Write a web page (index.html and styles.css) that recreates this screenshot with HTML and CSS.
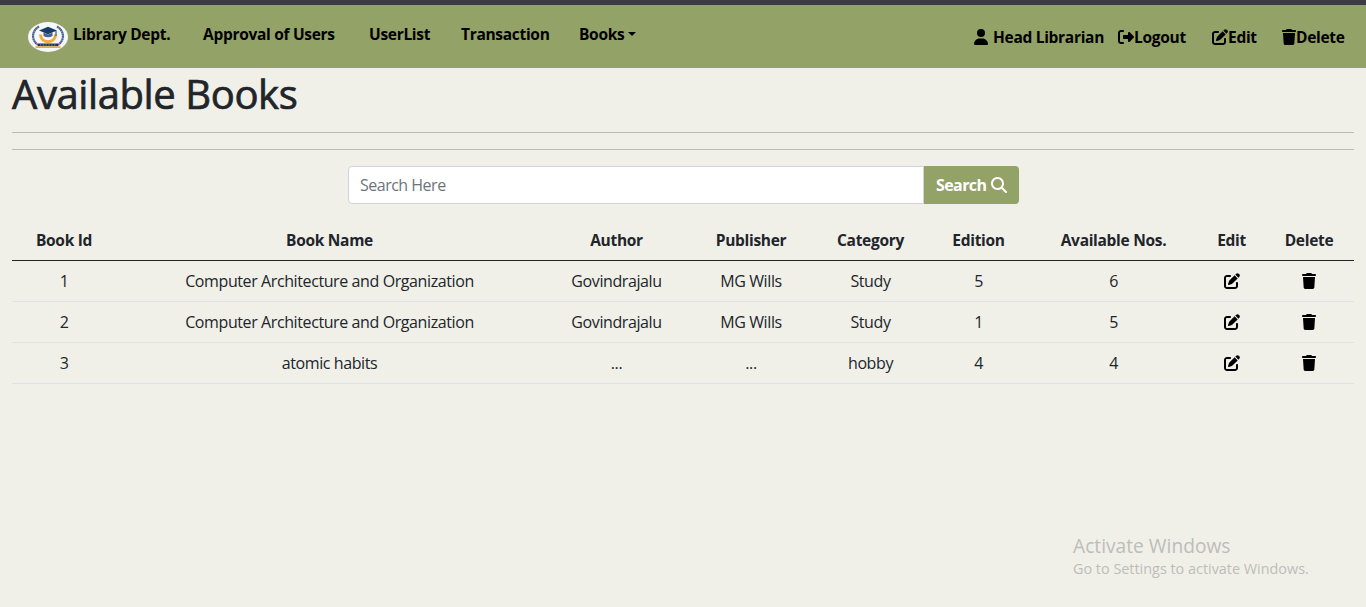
FILE: index.html
```html
<!DOCTYPE html>
<html lang="en">
<head>
<meta charset="utf-8">
<title>Available Books</title>
<link rel="stylesheet" href="styles.css">
</head>
<body>
<svg class="sprite" aria-hidden="true">
  <symbol id="user" viewBox="0 0 448 512"><path d="M224 256A128 128 0 1 0 224 0a128 128 0 1 0 0 256zm-45.7 48C79.8 304 0 383.8 0 482.3C0 498.7 13.3 512 29.7 512H418.3c16.4 0 29.7-13.3 29.7-29.7C448 383.8 368.2 304 269.7 304H178.3z"/></symbol>
  <symbol id="edit" viewBox="0 0 512 512"><path d="M471.6 21.7c-21.9-21.9-57.3-21.9-79.2 0L362.3 51.7l97.9 97.9 30.1-30.1c21.9-21.9 21.9-57.3 0-79.2L471.6 21.7zm-299.2 220c-6.1 6.1-10.8 13.6-13.5 21.9l-29.6 88.8c-2.9 8.6-.6 18.1 5.8 24.6s15.9 8.7 24.6 5.8l88.8-29.6c8.2-2.7 15.7-7.4 21.9-13.5L437.7 172.3 339.7 74.3 172.4 241.7zM96 64C43 64 0 107 0 160V416c0 53 43 96 96 96H352c53 0 96-43 96-96V320c0-17.7-14.3-32-32-32s-32 14.3-32 32v96c0 17.7-14.3 32-32 32H96c-17.7 0-32-14.3-32-32V160c0-17.7 14.3-32 32-32h96c17.7 0 32-14.3 32-32s-14.3-32-32-32H96z"/></symbol>
  <symbol id="trash" viewBox="0 0 448 512"><path d="M135.2 17.7L128 32H32C14.3 32 0 46.3 0 64S14.3 96 32 96H416c17.7 0 32-14.3 32-32s-14.3-32-32-32H320l-7.2-14.3C307.4 6.8 296.3 0 284.2 0H163.8c-12.1 0-23.2 6.8-28.6 17.7zM416 128H32L53.2 467c1.6 25.3 22.6 45 47.9 45H346.9c25.3 0 46.3-19.7 47.9-45L416 128z"/></symbol>
  <symbol id="logout" viewBox="0 0 512 512"><path d="M377.9 105.9L500.7 228.7c7.2 7.2 11.3 17.1 11.3 27.3s-4.1 20.1-11.3 27.3L377.9 406.1c-6.4 6.4-15 9.9-24 9.9c-18.7 0-33.9-15.2-33.9-33.9l0-62.1-128 0c-17.7 0-32-14.3-32-32l0-64c0-17.7 14.3-32 32-32l128 0 0-62.1c0-18.7 15.2-33.9 33.9-33.9c9 0 17.6 3.6 24 9.9zM160 96L96 96c-17.7 0-32 14.3-32 32l0 256c0 17.7 14.3 32 32 32l64 0c17.7 0 32 14.3 32 32s-14.3 32-32 32l-64 0c-53 0-96-43-96-96L0 128C0 75 43 32 96 32l64 0c17.7 0 32 14.3 32 32s-14.3 32-32 32z"/></symbol>
  <symbol id="search" viewBox="0 0 512 512"><path d="M416 208c0 45.9-14.9 88.3-40 122.7L502.6 457.4c12.5 12.5 12.5 32.8 0 45.3s-32.8 12.5-45.3 0L330.7 376c-34.4 25.2-76.8 40-122.7 40C93.1 416 0 322.9 0 208S93.1 0 208 0S416 93.1 416 208zM208 352a144 144 0 1 0 0-288 144 144 0 1 0 0 288z"/></symbol>
</svg>
<header class="navbar">
  <svg class="logo" viewBox="0 0 40 30">
    <ellipse cx="20" cy="15" rx="20" ry="15" fill="#f6f7f8"/>
    <g fill="none" stroke="#4a6390" stroke-width="2.2" stroke-dasharray="2 .3">
      <path d="M11 4.500C3.500 9 3 18 10 23"/>
      <path d="M29 4.500C36.500 9 37 18 30 23"/>
    </g>
    <path d="M12.500 12.500C12.500 22 27.500 22 27.500 12.500" fill="none" stroke="#f2a93b" stroke-width="3"/>
    <path d="M20 4.800L29 8.500L20 12.200L11 8.500Z" fill="#173a6b"/>
    <path d="M15.500 10.500V14Q20 16.500 24.500 14V10.500L20 12.500Z" fill="#46648e"/>
    <path d="M28 9V14" stroke="#173a6b"/>
    <rect x="10" y="21.500" width="20" height="2.800" fill="#173a6b"/>
    <path d="M12 23H28" stroke="#8394ad" stroke-width="1" stroke-dasharray="1.300 1.500"/>
    <path d="M7.500 24.300H32.500V26H7.500Z" fill="#f2a93b"/>
  </svg>
  <nav class="links">
    <a class="brand">Library Dept.</a>
    <a class="approval">Approval of Users</a>
    <a class="userlist">UserList</a>
    <a class="transaction">Transaction</a>
    <a class="books">Books<span class="caret"></span></a>
  </nav>
  <div class="account">
    <a class="librarian"><svg class="icon narrow"><use href="#user"/></svg><span>Head Librarian</span></a>
    <a class="logout"><svg class="icon"><use href="#logout"/></svg>Logout</a>
    <a class="edit"><svg class="icon"><use href="#edit"/></svg>Edit</a>
    <a class="delete"><svg class="icon narrow"><use href="#trash"/></svg>Delete</a>
  </div>
</header>
<main>
  <h1>Available Books</h1>
  <hr>
  <hr>
  <form class="search">
    <input type="text" placeholder="Search Here">
    <button type="button">Search <svg class="icon"><use href="#search"/></svg></button>
  </form>
  <table>
    <colgroup><col class="c-id"><col class="c-name"><col class="c-author"><col class="c-publisher"><col class="c-category"><col class="c-edition"><col class="c-available"><col class="c-edit"><col class="c-delete"></colgroup>
    <thead>
      <tr><th>Book Id</th><th>Book Name</th><th>Author</th><th>Publisher</th><th>Category</th><th>Edition</th><th>Available Nos.</th><th>Edit</th><th>Delete</th></tr>
    </thead>
    <tbody>
      <tr><td>1</td><td>Computer Architecture and Organization</td><td>Govindrajalu</td><td>MG Wills</td><td>Study</td><td>5</td><td>6</td><td><svg class="icon"><use href="#edit"/></svg></td><td><svg class="icon narrow"><use href="#trash"/></svg></td></tr>
      <tr><td>2</td><td>Computer Architecture and Organization</td><td>Govindrajalu</td><td>MG Wills</td><td>Study</td><td>1</td><td>5</td><td><svg class="icon"><use href="#edit"/></svg></td><td><svg class="icon narrow"><use href="#trash"/></svg></td></tr>
      <tr><td>3</td><td>atomic habits</td><td>...</td><td>...</td><td>hobby</td><td>4</td><td>4</td><td><svg class="icon"><use href="#edit"/></svg></td><td><svg class="icon narrow"><use href="#trash"/></svg></td></tr>
    </tbody>
  </table>
</main>
<aside class="watermark">
  <p class="watermark-title">Activate Windows</p>
  <p class="watermark-text">Go to Settings to activate Windows.</p>
</aside>
</body>
</html>
```
FILE: styles.css
```css
* { box-sizing: border-box; }
body {
  margin: 0;
  height: 607px;
  overflow: hidden;
  background: #f0f0e9;
  color: #212529;
  font: 16px/24px "Segoe UI", "Open Sans", "Noto Sans", sans-serif;
  letter-spacing: -0.4px;
}
.sprite { display: none; }
.icon { width: 16px; height: 16px; flex: none; fill: currentColor; }
.icon.narrow { width: 14px; }
.navbar {
  height: 68px;
  border-top: 5px solid #3c3c3c;
  background: #93a267;
  color: #000;
  display: flex;
  align-items: flex-start;
  padding: 17px 22px 0 28px;
  font-size: 15.5px;
  font-weight: 700;
  letter-spacing: -0.3px;
}
.logo { width: 40px; height: 30px; margin-right: 5px; flex: none; }
.links, .account { display: flex; white-space: nowrap; }
.links a { margin-right: 32px; }
.brand { width: 98px; }
.approval { width: 134px; }
.userlist { width: 60px; }
.transaction { width: 86px; }
.books { width: 58px; display: flex; align-items: center; }
.caret { margin-left: 4px; border: 4px solid transparent; border-top-color: #000; border-bottom: 0; }
.account { margin: 3px 0 0 auto; }
.account a { display: flex; align-items: center; }
.librarian { width: 144px; gap: 5px; }
.logout { width: 94px; }
.account .edit { width: 70px; }
.delete { width: 62px; }
main { padding: 0 12px; }
h1 {
  margin: 0 0 16px;
  padding-top: 2px;
  font-size: 40px;
  line-height: 48px;
  height: 48px;
  font-weight: 400;
  letter-spacing: -0.4px;
  -webkit-text-stroke: 0.7px currentColor;
}
hr { margin: 16px 0; border: 0; border-top: 1px solid #bbbcb7; }
.search { display: flex; width: 671px; height: 38px; margin: 0 auto 16px 336px; }
.search input {
  flex: 1;
  min-width: 0;
  border: 1px solid #ced4da;
  border-radius: 4px 0 0 4px;
  padding: 0 11px;
  font: inherit;
  letter-spacing: -0.5px;
  background: #fff;
}
.search input::placeholder { color: #6c757d; opacity: 1; }
.search button {
  display: flex;
  align-items: center;
  justify-content: space-between;
  width: 95px;
  border: 0;
  border-radius: 0 4px 4px 0;
  padding: 0 12px;
  background: #93a267;
  color: #fff;
  font: inherit;
  font-weight: 700;
  letter-spacing: -0.6px;
}
table { width: 1342px; table-layout: fixed; border-collapse: collapse; text-align: center; white-space: nowrap; }
.c-id { width: 104px; }
.c-name { width: 427px; }
.c-author { width: 147px; }
.c-publisher { width: 122px; }
.c-category { width: 117px; }
.c-edition { width: 99px; }
.c-available { width: 171px; }
.c-edit { width: 65px; }
.c-delete { width: 90px; }
th, td { height: 41px; padding: 8px 0; border-bottom: 1px solid #dee2e6; }
th { height: 40px; padding-bottom: 7px; font-size: 15.5px; font-weight: 700; border-bottom-color: #212529; letter-spacing: -0.3px; }
td .icon { display: block; margin: 0 auto; color: #000; }
.watermark { position: absolute; left: 1073px; top: 533px; color: #bdbdb9; white-space: nowrap; letter-spacing: 0; }
.watermark p { margin: 0; }
.watermark-title { font-size: 19.2px; line-height: 26px; }
.watermark-text { font-size: 14.4px; line-height: 20px; }
```
